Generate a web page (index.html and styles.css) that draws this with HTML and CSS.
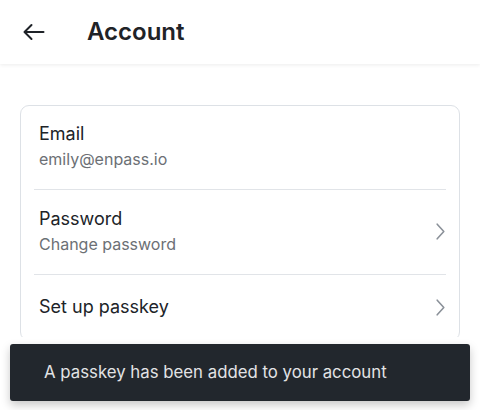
FILE: index.html
```html
<!DOCTYPE html>
<html lang="en">
<head>
<meta charset="utf-8">
<title>Account</title>
<link rel="stylesheet" href="styles.css">
</head>
<body>
<div class="screen">
  <header class="topbar">
    <button class="back" aria-label="Back">
      <svg width="22" height="18" viewBox="0 0 22 18" fill="none" stroke="#1f2328" stroke-width="2" stroke-linecap="round" stroke-linejoin="round">
        <path d="M20.5 9H2"/>
        <path d="M8.5 2L1.5 9L8.5 16"/>
      </svg>
    </button>
    <h1 class="title">Account</h1>
  </header>
  <main class="content">
    <section class="card">
      <div class="row">
        <div class="row-text">
          <div class="label">Email</div>
          <div class="value">emily@enpass.io</div>
        </div>
      </div>
      <div class="divider"></div>
      <div class="row row-link">
        <div class="row-text">
          <div class="label">Password</div>
          <div class="value">Change password</div>
        </div>
        <svg class="chev" width="9" height="17" viewBox="0 0 9 17" fill="none" stroke="#8b9199" stroke-width="1.6" stroke-linecap="round" stroke-linejoin="round"><path d="M1.2 1.2L7.8 8.5L1.2 15.8"/></svg>
      </div>
      <div class="divider"></div>
      <div class="row row-single">
        <div class="row-text">
          <div class="label">Set up passkey</div>
        </div>
        <svg class="chev" width="9" height="17" viewBox="0 0 9 17" fill="none" stroke="#8b9199" stroke-width="1.6" stroke-linecap="round" stroke-linejoin="round"><path d="M1.2 1.2L7.8 8.5L1.2 15.8"/></svg>
      </div>
    </section>
  </main>
  <div class="toast">A passkey has been added to your account</div>
</div>
</body>
</html>
```

FILE: styles.css
```css
* { box-sizing: border-box; }
html, body { margin: 0; padding: 0; background: #ffffff; }
body { font-family: Inter, "Noto Sans", sans-serif; color: #1f2328; }
.screen { position: relative; width: 480px; height: 410px; overflow: hidden; background: #fff; }
.topbar {
  height: 64px;
  display: flex;
  align-items: center;
  padding-left: 23px;
  background: #fff;
  box-shadow: 0 1px 4px rgba(0,0,0,0.08);
  position: relative;
  z-index: 1;
}
.back { border: 0; background: none; padding: 0; width: 22px; height: 18px; display: flex; cursor: pointer; }
.title { margin: 0 0 0 42px; font-size: 24px; font-weight: 600; color: #1f2328; line-height: 28px; }
.content { height: 273px; overflow: hidden; padding: 41px 20px 0; }
.card {
  border: 1px solid #dde1e6;
  border-radius: 9px;
  padding: 0 13px;
}
.row { display: flex; align-items: center; padding: 16px 1px 18px 5px; }
.row-link { padding-top: 17px; }
.row-single { padding: 20px 1px 21px 5px; }
.row-text { flex: 1; }
.label { font-size: 18px; line-height: 24px; color: #202328; }
.value { font-size: 16px; line-height: 24px; margin-top: 1px; color: #6c7075; }
.chev { flex: none; }
.divider { height: 1px; background: #e1e4e8; }
.toast {
  position: absolute;
  left: 10px; right: 10px; top: 344px;
  height: 57px;
  background: #22272d;
  color: #e2e3e5;
  border-radius: 3px;
  font-size: 16.8px;
  line-height: 57px;
  padding-left: 34px;
  box-shadow: 0 4px 10px rgba(0,0,0,0.22);
}
```
